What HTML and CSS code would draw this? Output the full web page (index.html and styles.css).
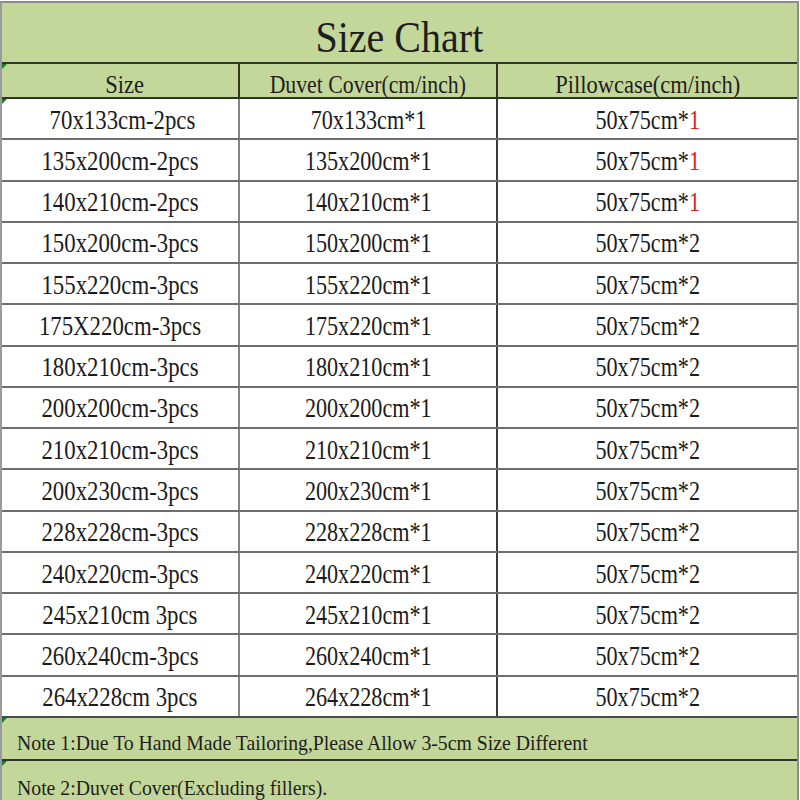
FILE: index.html
```html
<!DOCTYPE html>
<html>
<head>
<meta charset="utf-8">
<title>Size Chart</title>
<link rel="stylesheet" href="styles.css">
</head>
<body>
<div class="chart">
  <div class="title-row"><span class="title-text">Size Chart</span></div>
  <div class="row head-row">
    <div class="cell c1 flag head-size"><span class="head-text">Size</span></div>
    <div class="cell c2"><span class="head-text head-duvet">Duvet Cover(cm/inch)</span></div>
    <div class="cell c3"><span class="head-text">Pillowcase(cm/inch)</span></div>
  </div>
  <div class="row data-row">
    <div class="cell c1 flag"><span class="data-text">&nbsp;70x133cm-2pcs</span></div>
    <div class="cell c2"><span class="data-text">70x133cm*1</span></div>
    <div class="cell c3"><span class="data-text">50x75cm*<span class="red">1</span></span></div>
  </div>
  <div class="row data-row">
    <div class="cell c1"><span class="data-text">135x200cm-2pcs</span></div>
    <div class="cell c2"><span class="data-text">135x200cm*1</span></div>
    <div class="cell c3"><span class="data-text">50x75cm*<span class="red">1</span></span></div>
  </div>
  <div class="row data-row">
    <div class="cell c1"><span class="data-text">140x210cm-2pcs</span></div>
    <div class="cell c2"><span class="data-text">140x210cm*1</span></div>
    <div class="cell c3"><span class="data-text">50x75cm*<span class="red">1</span></span></div>
  </div>
  <div class="row data-row">
    <div class="cell c1"><span class="data-text">150x200cm-3pcs</span></div>
    <div class="cell c2"><span class="data-text">150x200cm*1</span></div>
    <div class="cell c3"><span class="data-text">50x75cm*2</span></div>
  </div>
  <div class="row data-row">
    <div class="cell c1"><span class="data-text">155x220cm-3pcs</span></div>
    <div class="cell c2"><span class="data-text">155x220cm*1</span></div>
    <div class="cell c3"><span class="data-text">50x75cm*2</span></div>
  </div>
  <div class="row data-row">
    <div class="cell c1"><span class="data-text">175X220cm-3pcs</span></div>
    <div class="cell c2"><span class="data-text">175x220cm*1</span></div>
    <div class="cell c3"><span class="data-text">50x75cm*2</span></div>
  </div>
  <div class="row data-row">
    <div class="cell c1"><span class="data-text">180x210cm-3pcs</span></div>
    <div class="cell c2"><span class="data-text">180x210cm*1</span></div>
    <div class="cell c3"><span class="data-text">50x75cm*2</span></div>
  </div>
  <div class="row data-row">
    <div class="cell c1"><span class="data-text">200x200cm-3pcs</span></div>
    <div class="cell c2"><span class="data-text">200x200cm*1</span></div>
    <div class="cell c3"><span class="data-text">50x75cm*2</span></div>
  </div>
  <div class="row data-row">
    <div class="cell c1"><span class="data-text">210x210cm-3pcs</span></div>
    <div class="cell c2"><span class="data-text">210x210cm*1</span></div>
    <div class="cell c3"><span class="data-text">50x75cm*2</span></div>
  </div>
  <div class="row data-row">
    <div class="cell c1"><span class="data-text">200x230cm-3pcs</span></div>
    <div class="cell c2"><span class="data-text">200x230cm*1</span></div>
    <div class="cell c3"><span class="data-text">50x75cm*2</span></div>
  </div>
  <div class="row data-row">
    <div class="cell c1"><span class="data-text">228x228cm-3pcs</span></div>
    <div class="cell c2"><span class="data-text">228x228cm*1</span></div>
    <div class="cell c3"><span class="data-text">50x75cm*2</span></div>
  </div>
  <div class="row data-row">
    <div class="cell c1"><span class="data-text">240x220cm-3pcs</span></div>
    <div class="cell c2"><span class="data-text">240x220cm*1</span></div>
    <div class="cell c3"><span class="data-text">50x75cm*2</span></div>
  </div>
  <div class="row data-row">
    <div class="cell c1"><span class="data-text">245x210cm 3pcs</span></div>
    <div class="cell c2"><span class="data-text">245x210cm*1</span></div>
    <div class="cell c3"><span class="data-text">50x75cm*2</span></div>
  </div>
  <div class="row data-row">
    <div class="cell c1"><span class="data-text">260x240cm-3pcs</span></div>
    <div class="cell c2"><span class="data-text">260x240cm*1</span></div>
    <div class="cell c3"><span class="data-text">50x75cm*2</span></div>
  </div>
  <div class="row data-row last">
    <div class="cell c1"><span class="data-text">264x228cm 3pcs</span></div>
    <div class="cell c2"><span class="data-text">264x228cm*1</span></div>
    <div class="cell c3"><span class="data-text">50x75cm*2</span></div>
  </div>
  <div class="note-row flag"><span class="note-text">Note 1:Due To Hand Made Tailoring,Please Allow 3-5cm Size Different</span></div>
  <div class="note-row note-last flag"><span class="note-text">Note 2:Duvet Cover(Excluding fillers).</span></div>
</div>
</body>
</html>
```

FILE: styles.css
```css
* { box-sizing: border-box; }

html, body {
  margin: 0;
  padding: 0;
  background: #ffffff;
  overflow: hidden;
}

body {
  font-family: "Liberation Serif", "Times New Roman", serif;
  color: #1b1b1b;
  height: 800px;
}

.chart {
  width: 799px;
  margin-top: 1px;
  border-top: 2px solid #8c8c8c;
  border-left: 2px solid #9a9a9a;
  border-right: 2px solid #8c8c8c;
  display: flex;
  flex-direction: column;
}

.title-row {
  height: 61px;
  background: #c4d79b;
  border-bottom: 2px solid #2f3627;
  display: flex;
  align-items: center;
  justify-content: center;
  padding-top: 9px;
}

.title-text {
  display: inline-block;
  font-size: 45px;
  line-height: 1;
  transform: scaleX(0.89);
  color: #1e1e1e;
}

.row {
  display: grid;
  grid-template-columns: 238px 258px 1fr;
}

.head-row {
  height: 35px;
  background: #c4d79b;
  border-bottom: 2px solid #2f3627;
}

.data-row {
  height: 41.27px;
  border-bottom: 2px solid #6e6e6e;
}

.data-row.last {
  border-bottom-color: #4a4a4a;
}

.cell {
  position: relative;
  display: flex;
  align-items: center;
  justify-content: center;
  white-space: nowrap;
}

.c1 { border-right: 2px solid #858585; }
.c2 { border-right: 2px solid #3c3c3c; }

.head-row .c1 { border-right-color: #2f3627; }
.head-row .c2 { border-right-color: #2f3627; }

.head-row .cell { padding-top: 8px; }
.head-row .head-size { padding-left: 9px; }
.data-row .cell { padding-top: 3px; }

.head-text {
  display: inline-block;
  font-size: 25px;
  line-height: 1;
  transform: scaleX(0.9);
  color: #1e1e1e;
}

.head-text.head-duvet {
  transform: scaleX(0.87);
}

.data-text {
  display: inline-block;
  font-size: 27px;
  line-height: 1;
  transform: scaleX(0.82);
}

.data-row .c1 .data-text {
  transform: scaleX(0.845);
}

.red { color: #e0201e; }

.note-row {
  position: relative;
  height: 43px;
  background: #c4d79b;
  border-bottom: 2px solid #2f3627;
  display: flex;
  align-items: center;
  padding-left: 15px;
  padding-top: 10px;
  white-space: nowrap;
}

.note-row.note-last {
  height: 45px;
  border-bottom: none;
  padding-top: 10px;
}

.note-text {
  display: inline-block;
  font-size: 21px;
  line-height: 1;
  transform: scaleX(0.94);
  transform-origin: left center;
  color: #1e1e1e;
}

.flag::before {
  content: "";
  position: absolute;
  left: 0;
  top: 0;
  width: 0;
  height: 0;
  border-top: 5px solid #1f7a2e;
  border-right: 5px solid transparent;
}
```
